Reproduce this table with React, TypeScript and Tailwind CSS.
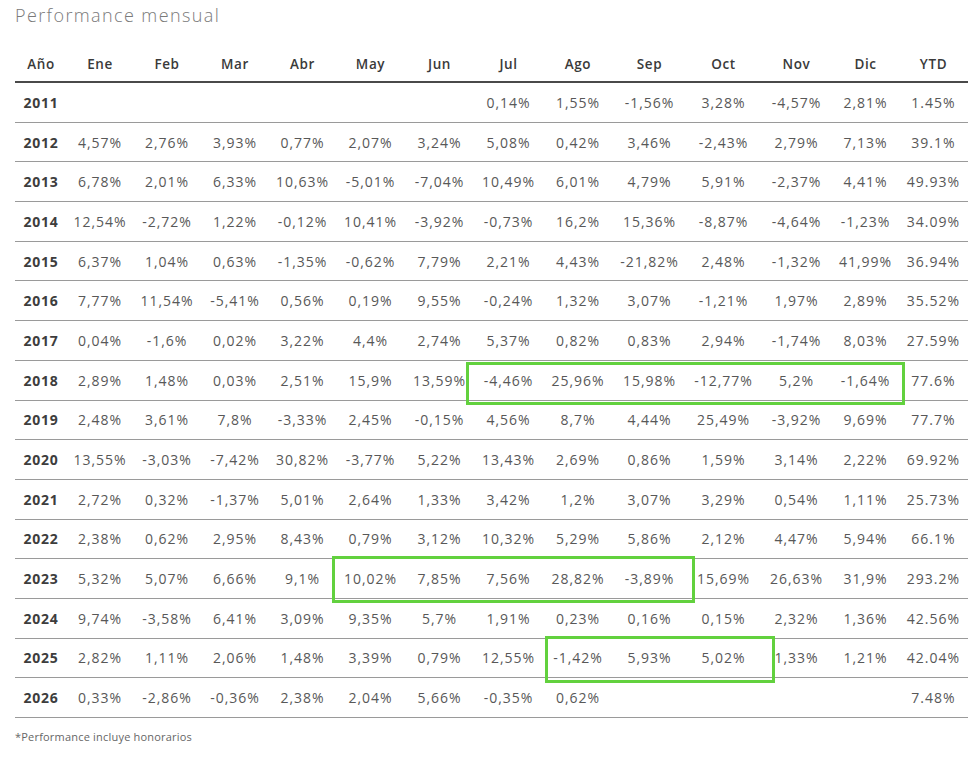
import React from "react";

const headers = ["Año","Ene","Feb","Mar","Abr","May","Jun","Jul","Ago","Sep","Oct","Nov","Dic","YTD"];

const rows: string[][] = [
  ["2011","","","","","","","0,14%","1,55%","-1,56%","3,28%","-4,57%","2,81%","1.45%"],
  ["2012","4,57%","2,76%","3,93%","0,77%","2,07%","3,24%","5,08%","0,42%","3,46%","-2,43%","2,79%","7,13%","39.1%"],
  ["2013","6,78%","2,01%","6,33%","10,63%","-5,01%","-7,04%","10,49%","6,01%","4,79%","5,91%","-2,37%","4,41%","49.93%"],
  ["2014","12,54%","-2,72%","1,22%","-0,12%","10,41%","-3,92%","-0,73%","16,2%","15,36%","-8,87%","-4,64%","-1,23%","34.09%"],
  ["2015","6,37%","1,04%","0,63%","-1,35%","-0,62%","7,79%","2,21%","4,43%","-21,82%","2,48%","-1,32%","41,99%","36.94%"],
  ["2016","7,77%","11,54%","-5,41%","0,56%","0,19%","9,55%","-0,24%","1,32%","3,07%","-1,21%","1,97%","2,89%","35.52%"],
  ["2017","0,04%","-1,6%","0,02%","3,22%","4,4%","2,74%","5,37%","0,82%","0,83%","2,94%","-1,74%","8,03%","27.59%"],
  ["2018","2,89%","1,48%","0,03%","2,51%","15,9%","13,59%","-4,46%","25,96%","15,98%","-12,77%","5,2%","-1,64%","77.6%"],
  ["2019","2,48%","3,61%","7,8%","-3,33%","2,45%","-0,15%","4,56%","8,7%","4,44%","25,49%","-3,92%","9,69%","77.7%"],
  ["2020","13,55%","-3,03%","-7,42%","30,82%","-3,77%","5,22%","13,43%","2,69%","0,86%","1,59%","3,14%","2,22%","69.92%"],
  ["2021","2,72%","0,32%","-1,37%","5,01%","2,64%","1,33%","3,42%","1,2%","3,07%","3,29%","0,54%","1,11%","25.73%"],
  ["2022","2,38%","0,62%","2,95%","8,43%","0,79%","3,12%","10,32%","5,29%","5,86%","2,12%","4,47%","5,94%","66.1%"],
  ["2023","5,32%","5,07%","6,66%","9,1%","10,02%","7,85%","7,56%","28,82%","-3,89%","15,69%","26,63%","31,9%","293.2%"],
  ["2024","9,74%","-3,58%","6,41%","3,09%","9,35%","5,7%","1,91%","0,23%","0,16%","0,15%","2,32%","1,36%","42.56%"],
  ["2025","2,82%","1,11%","2,06%","1,48%","3,39%","0,79%","12,55%","-1,42%","5,93%","5,02%","1,33%","1,21%","42.04%"],
  ["2026","0,33%","-2,86%","-0,36%","2,38%","2,04%","5,66%","-0,35%","0,62%","","","","","7.48%"],
];

const grid =
  "grid grid-cols-[52px_66px_68px_68px_67px_69px_69px_69px_70px_73px_75px_71px_67px_69px] items-center";

export default function App() {
  return (
    <div className="relative w-[979px] h-[759px] bg-white overflow-hidden" style={{ fontFamily: "'Open Sans', sans-serif" }}>
      <div className="pl-[15px] pt-[4px]">
        <h1 className="text-[18px] leading-[22px] font-light tracking-[1.4px] text-[#7a7a7a]">
          Performance mensual
        </h1>
        <div className="w-[953px] mt-[21px]">
          <div className={`${grid} h-[36px] border-b-2 border-[#4a4a4a]`}>
            {headers.map((h) => (
              <div key={h} className="text-center text-[13.5px] font-semibold tracking-[0.6px] text-[#3a3a3a]">
                {h}
              </div>
            ))}
          </div>
          {rows.map((r) => (
            <div key={r[0]} className={`${grid} h-[39.7px] border-b-[1.5px] border-[#9a9a9a]`}>
              {r.map((c, i) =>
                i === 0 ? (
                  <div key={i} className="text-center text-[14px] font-bold tracking-[0.8px] text-[#3d3d3d]">
                    {c}
                  </div>
                ) : (
                  <div key={i} className="text-center text-[14px] tracking-[1px] text-[#585858]">
                    {c}
                  </div>
                )
              )}
            </div>
          ))}
          <div className="mt-[11px] text-[11px] leading-[15px] tracking-[0.2px] text-[#666]">*Performance incluye honorarios</div>
        </div>
      </div>
      <div className="absolute left-[466px] top-[362px] w-[439px] h-[43px] border-[3px] border-[#62d13e]" />
      <div className="absolute left-[332px] top-[556px] w-[363px] h-[47px] border-[3px] border-[#62d13e]" />
      <div className="absolute left-[545px] top-[636px] w-[230px] h-[47px] border-[3px] border-[#62d13e]" />
    </div>
  );
}
